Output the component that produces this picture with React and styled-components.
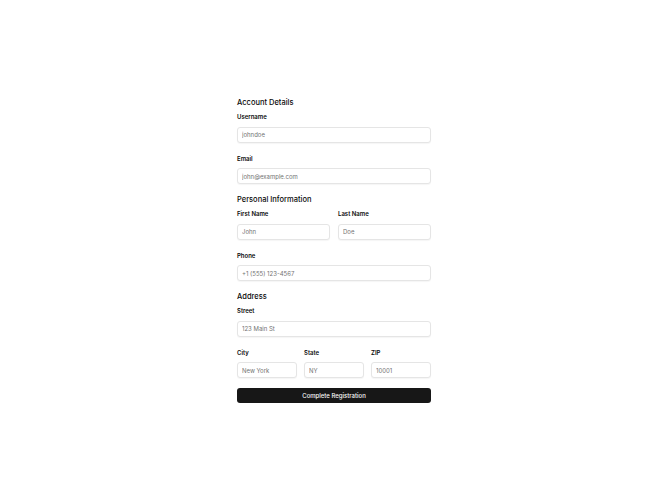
import React from 'react';
import styled, { createGlobalStyle } from 'styled-components';

const GlobalStyle = createGlobalStyle`
	html, body {
		margin: 0;
		padding: 0;
		background: #ffffff;
		font-family: Inter, "Noto Sans", sans-serif;
		color: #0a0a0a;
	}
	* {
		box-sizing: border-box;
	}
`;

const App = () => {
	return (
		<>
			<GlobalStyle />
			<Page>
				<Form onSubmit={(e) => e.preventDefault()}>
					<Section>
						<Heading>Account Details</Heading>
						<Fields>
							<Field>
								<Label>Username</Label>
								<Input placeholder="johndoe" />
							</Field>
							<Field>
								<Label>Email</Label>
								<Input placeholder="john@example.com" />
							</Field>
						</Fields>
					</Section>
					<Section>
						<Heading>Personal Information</Heading>
						<Fields>
							<Row $cols={2}>
								<Field>
									<Label>First Name</Label>
									<Input placeholder="John" />
								</Field>
								<Field>
									<Label>Last Name</Label>
									<Input placeholder="Doe" />
								</Field>
							</Row>
							<Field>
								<Label>Phone</Label>
								<Input placeholder="+1 (555) 123-4567" />
							</Field>
						</Fields>
					</Section>
					<Section>
						<Heading>Address</Heading>
						<Fields>
							<Field>
								<Label>Street</Label>
								<Input placeholder="123 Main St" />
							</Field>
							<Row $cols={3}>
								<Field>
									<Label>City</Label>
									<Input placeholder="New York" />
								</Field>
								<Field>
									<Label>State</Label>
									<Input placeholder="NY" />
								</Field>
								<Field>
									<Label>ZIP</Label>
									<Input placeholder="10001" />
								</Field>
							</Row>
						</Fields>
					</Section>
					<Btn type="submit">Complete Registration</Btn>
				</Form>
			</Page>
		</>
	);
};

export default App;

const Page = styled.div`
	display: flex;
	justify-content: center;
	min-height: 501px;
	padding-top: 97px;
`;

const Form = styled.form`
	display: flex;
	flex-direction: column;
	gap: 10px;
	width: 194px;
`;

const Section = styled.div`
	display: flex;
	flex-direction: column;
	gap: 3px;
`;

const Heading = styled.div`
	font-size: 7.5px;
	font-weight: 500;
	line-height: 12px;
`;

const Fields = styled.div`
	display: flex;
	flex-direction: column;
	gap: 11px;
`;

const Row = styled.div`
	display: grid;
	grid-template-columns: repeat(${(p) => p.$cols}, 1fr);
	gap: ${(p) => (p.$cols === 3 ? '7px' : '8px')};
`;

const Field = styled.div`
	display: flex;
	flex-direction: column;
	gap: 4.5px;
`;

const Label = styled.label`
	font-size: 6px;
	font-weight: 600;
	line-height: 10px;
`;

const Input = styled.input`
	width: 100%;
	height: 16px;
	padding: 0 4px;
	border: 1px solid #e5e5e5;
	border-radius: 3px;
	background: #ffffff;
	font-family: inherit;
	font-size: 6px;
	color: #0a0a0a;
	box-shadow: 0 1px 1px rgba(0, 0, 0, 0.04);
	outline: none;

	&::placeholder {
		color: #737373;
	}
`;

const Btn = styled.button`
	height: 15px;
	border: none;
	border-radius: 3px;
	background: #171717;
	color: #fafafa;
	font-family: inherit;
	font-size: 6px;
	font-weight: 500;
	cursor: pointer;
`;
